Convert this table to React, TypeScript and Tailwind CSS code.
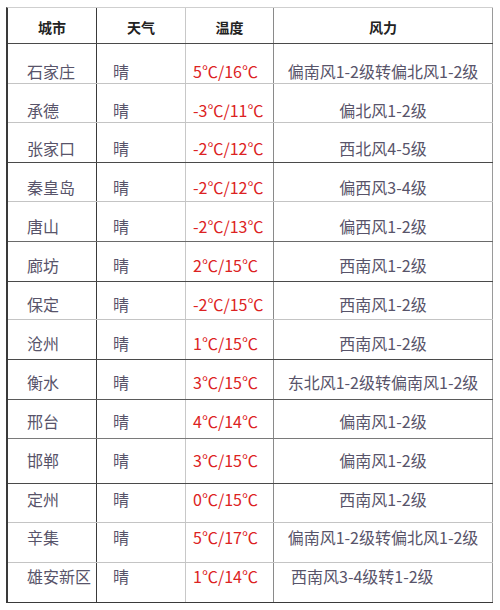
import React from "react";

type Row = {
  city: string;
  temp: string;
  wind: string;
  h: string;
  pt: string;
  line: string;
  windLeft?: boolean;
};

const ROWS: Row[] = [
  { city: "石家庄", temp: "5℃/16℃", wind: "偏南风1-2级转偏北风1-2级", h: "h-[40px]", pt: "pt-[17px]", line: "border-b-[#c4c4c4]" },
  { city: "承德", temp: "-3℃/11℃", wind: "偏北风1-2级", h: "h-[39px]", pt: "pt-[16px]", line: "border-b-[#c4c4c4]" },
  { city: "张家口", temp: "-2℃/12℃", wind: "西北风4-5级", h: "h-[40px]", pt: "pt-[15px]", line: "border-b-[#4a4a4a]" },
  { city: "秦皇岛", temp: "-2℃/12℃", wind: "偏西风3-4级", h: "h-[39px]", pt: "pt-[14px]", line: "border-b-[#c4c4c4]" },
  { city: "唐山", temp: "-2℃/13℃", wind: "偏西风1-2级", h: "h-[40px]", pt: "pt-[14px]", line: "border-b-[#6a6a6a]" },
  { city: "廊坊", temp: "2℃/15℃", wind: "西南风1-2级", h: "h-[40px]", pt: "pt-[13px]", line: "border-b-[#4a4a4a]" },
  { city: "保定", temp: "-2℃/15℃", wind: "西南风1-2级", h: "h-[38px]", pt: "pt-[12px]", line: "border-b-[#c4c4c4]" },
  { city: "沧州", temp: "1℃/15℃", wind: "西南风1-2级", h: "h-[40px]", pt: "pt-[13px]", line: "border-b-[#4a4a4a]" },
  { city: "衡水", temp: "3℃/15℃", wind: "东北风1-2级转偏南风1-2级", h: "h-[40px]", pt: "pt-[12px]", line: "border-b-[#5a5a5a]" },
  { city: "邢台", temp: "4℃/14℃", wind: "偏南风1-2级", h: "h-[39px]", pt: "pt-[11px]", line: "border-b-[#7a7a7a]" },
  { city: "邯郸", temp: "3℃/15℃", wind: "偏南风1-2级", h: "h-[45px]", pt: "pt-[11px]", line: "border-b-[#4a4a4a]" },
  { city: "定州", temp: "0℃/15℃", wind: "西南风1-2级", h: "h-[39px]", pt: "pt-[5px]", line: "border-b-[#c4c4c4]" },
  { city: "辛集", temp: "5℃/17℃", wind: "偏南风1-2级转偏北风1-2级", h: "h-[40px]", pt: "pt-[4px]", line: "border-b-[#c4c4c4]" },
  { city: "雄安新区", temp: "1℃/14℃", wind: "西南风3-4级转1-2级", h: "h-[40px]", pt: "pt-[3px]", line: "border-b-[#3a3a3a]", windLeft: true },
];

const font = "font-['Noto_Sans_CJK_SC','Noto_Sans',sans-serif]";

const App = () => {
  return (
    <div className={`w-[500px] h-[610px] bg-white pt-[7px] pl-[6px] ${font}`}>
      <div className="w-[487px] border-l-2 border-l-[#3a3a3a] border-t border-t-[#cfcfcf]">
        {/* header */}
        <div className="grid grid-cols-[89px_89px_88px_219px] h-[36px] border-b border-b-[#4a4a4a] text-[14px] leading-[20px] font-bold text-[#222]">
          <div className="border-r border-r-[#3a3a3a] pt-[9px] text-center">城市</div>
          <div className="border-r border-r-[#c8c8c8] pt-[9px] text-center">天气</div>
          <div className="border-r border-r-[#8a8a8a] pt-[9px] text-center">温度</div>
          <div className="border-r border-r-[#9a9a9a] pt-[9px] text-center">风力</div>
        </div>

        {ROWS.map((row) => (
          <div
            key={row.city}
            className={`grid grid-cols-[89px_89px_88px_219px] border-b ${row.h} ${row.line} text-[16px] leading-[20px] text-[#58546a]`}
          >
            <div className={`border-r border-r-[#3a3a3a] pl-[19px] ${row.pt}`}>
              {row.city}
            </div>
            <div className={`border-r border-r-[#c8c8c8] pl-[16px] ${row.pt}`}>
              晴
            </div>
            <div className={`border-r border-r-[#8a8a8a] pl-[7px] text-[#dc2222] ${row.pt}`}>
              {row.temp}
            </div>
            <div
              className={`border-r border-r-[#9a9a9a] whitespace-nowrap ${row.pt} ${
                row.windLeft ? "pl-[17px]" : "text-center"
              }`}
            >
              {row.wind}
            </div>
          </div>
        ))}
      </div>
    </div>
  );
};

export default App;
